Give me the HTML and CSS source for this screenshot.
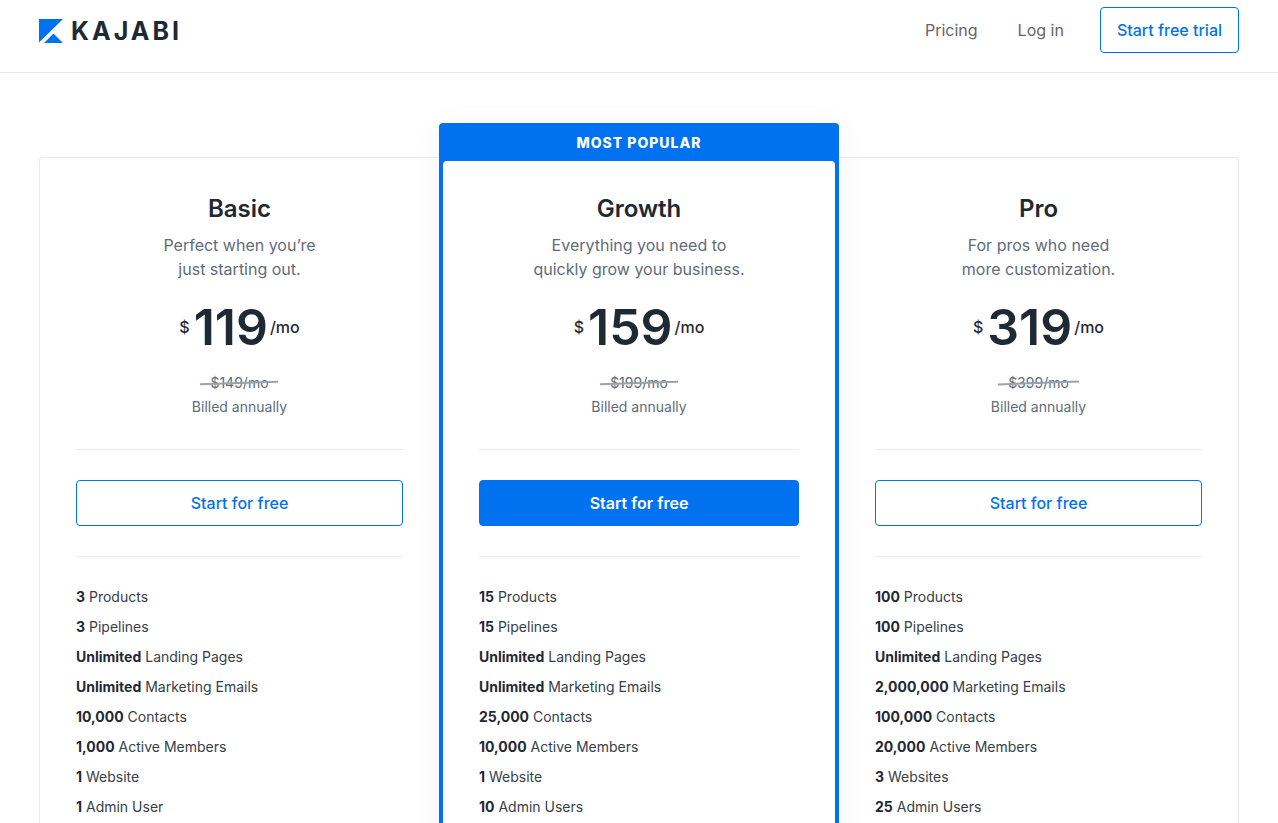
FILE: index.html
```
<!DOCTYPE html>
<html lang="en">
<head>
<meta charset="utf-8">
<meta name="viewport" content="width=device-width, initial-scale=1">
<title>Kajabi Pricing</title>
<link rel="stylesheet" href="styles.css">
</head>
<body>
<header class="header">
  <div class="container header-inner">
    <a class="logo" href="#">
      <svg class="logo-mark" viewBox="0 0 24 24" aria-hidden="true"><path d="M0 0h24L0 23.5zM14.5 14.5L24 24H5z" fill="#0072ef"/></svg>
      <span>KAJABI</span>
    </a>
    <nav class="nav">
      <a class="nav-link" href="#">Pricing</a>
      <a class="nav-link" href="#">Log in</a>
      <a class="button" href="#">Start free trial</a>
    </nav>
  </div>
</header>
<main class="container plans">
  <section class="plan plan-first">
    <div class="plan-body">
      <h2 class="plan-name">Basic</h2>
      <p class="plan-text">Perfect when you’re<br>just starting out.</p>
      <p class="price"><span>$</span><strong class="amount">119</strong><span>/mo</span></p>
      <p class="billing"><s class="old-price">$149/mo</s><br>Billed annually</p>
      <div class="action"><button class="button button-wide" type="button">Start for free</button></div>
      <ul class="features">
        <li><b>3</b> Products</li>
        <li><b>3</b> Pipelines</li>
        <li><b>Unlimited</b> Landing Pages</li>
        <li><b>Unlimited</b> Marketing Emails</li>
        <li><b>10,000</b> Contacts</li>
        <li><b>1,000</b> Active Members</li>
        <li><b>1</b> Website</li>
        <li><b>1</b> Admin User</li>
      </ul>
    </div>
  </section>
  <section class="plan-popular">
    <p class="popular-label">MOST POPULAR</p>
    <div class="plan-body">
      <h2 class="plan-name">Growth</h2>
      <p class="plan-text">Everything you need to<br>quickly grow your business.</p>
      <p class="price"><span>$</span><strong class="amount">159</strong><span>/mo</span></p>
      <p class="billing"><s class="old-price">$199/mo</s><br>Billed annually</p>
      <div class="action"><button class="button button-wide button-filled" type="button">Start for free</button></div>
      <ul class="features">
        <li><b>15</b> Products</li>
        <li><b>15</b> Pipelines</li>
        <li><b>Unlimited</b> Landing Pages</li>
        <li><b>Unlimited</b> Marketing Emails</li>
        <li><b>25,000</b> Contacts</li>
        <li><b>10,000</b> Active Members</li>
        <li><b>1</b> Website</li>
        <li><b>10</b> Admin Users</li>
      </ul>
    </div>
  </section>
  <section class="plan plan-last">
    <div class="plan-body">
      <h2 class="plan-name">Pro</h2>
      <p class="plan-text">For pros who need<br>more customization.</p>
      <p class="price"><span>$</span><strong class="amount">319</strong><span>/mo</span></p>
      <p class="billing"><s class="old-price">$399/mo</s><br>Billed annually</p>
      <div class="action"><button class="button button-wide" type="button">Start for free</button></div>
      <ul class="features">
        <li><b>100</b> Products</li>
        <li><b>100</b> Pipelines</li>
        <li><b>Unlimited</b> Landing Pages</li>
        <li><b>2,000,000</b> Marketing Emails</li>
        <li><b>100,000</b> Contacts</li>
        <li><b>20,000</b> Active Members</li>
        <li><b>3</b> Websites</li>
        <li><b>25</b> Admin Users</li>
      </ul>
    </div>
  </section>
</main>
</body>
</html>
```
FILE: styles.css
```
* { box-sizing: border-box; }
body {
  margin: 0;
  background: #fff;
  color: #1f2933;
  font: 16px/24px Inter, "Liberation Sans", sans-serif;
}
h2, p, ul { margin: 0; padding: 0; }
a { text-decoration: none; }

.container {
  width: 100%;
  max-width: 1248px;
  margin: 0 auto;
  padding: 0 24px;
}
.header { border-bottom: 1px solid #e4e7eb; }
.header-inner {
  display: flex;
  align-items: center;
  justify-content: space-between;
  padding-top: 7px;
  padding-bottom: 19px;
}
.logo {
  display: flex;
  align-items: center;
  gap: 8px;
  padding-top: 2px;
  color: #1f2933;
  font-size: 25px;
  font-weight: 700;
  letter-spacing: 3px;
}
.logo-mark { width: 24px; height: 24px; }
.nav { display: flex; align-items: center; }
.nav-link { margin-right: 40px; color: #66646b; }
.nav-link:nth-child(2) { margin-right: 36px; }

.button {
  display: block;
  height: 46px;
  padding: 0 16px;
  border: 1px solid #0072ef;
  border-radius: 4px;
  background: #fff;
  color: #0072ef;
  font: 500 16px/44px Inter, "Liberation Sans", sans-serif;
  text-align: center;
}
.button-wide { width: 100%; }
.button-filled { background: #0072ef; color: #fff; font-weight: 600; }

.plans {
  display: grid;
  grid-template-columns: repeat(3, 1fr);
  padding-top: 50px;
}
.plan {
  margin-top: 34px;
  border: 1px solid #e9ebee;
}
.plan-first { border-right: 0; border-radius: 4px 0 0 4px; }
.plan-last { border-left: 0; border-radius: 0 4px 4px 0; }
.plan-popular {
  position: relative;
  padding: 0 4px;
  border-radius: 4px;
  background: #0072ef;
  box-shadow: 0 4px 32px rgba(0, 0, 0, 0.05);
}
.popular-label {
  padding: 8px 0 6px;
  color: #fff;
  font-size: 14px;
  font-weight: 800;
  letter-spacing: 1px;
  text-align: center;
}
.plan-body {
  padding: 35px 36px 36px;
  text-align: center;
}
.plan-popular .plan-body {
  padding-top: 32px;
  border-radius: 4px;
  background: #fff;
}
.plan-name { margin-bottom: 8px; font-size: 24px; font-weight: 600; line-height: 32px; }
.plan-text { color: #5f6c7a; }
.price {
  display: flex;
  align-items: center;
  justify-content: center;
  padding: 14px 0 12px;
  font-weight: 500;
}
.amount {
  margin: 0 2px 0 4px;
  font-size: 50px;
  font-weight: 600;
  line-height: 64px;
}
.billing { padding-bottom: 30px; color: #5f6c7a; font-size: 14px; }
.old-price {
  display: inline-block;
  position: relative;
  padding: 0 10px;
  text-decoration: none;
}
.old-price::after {
  content: "";
  position: absolute;
  top: 11px;
  left: 0;
  width: 100%;
  height: 2px;
  background: #9aa3ac;
  transform: rotate(-2deg);
}
.action {
  padding: 30px 0;
  border: solid #e9edef;
  border-width: 1px 0;
}
.features {
  padding-top: 25px;
  list-style: none;
  color: #364048;
  font-size: 14px;
  line-height: 30px;
  text-align: left;
}
.features b { color: #1f2933; font-weight: 700; }
```
